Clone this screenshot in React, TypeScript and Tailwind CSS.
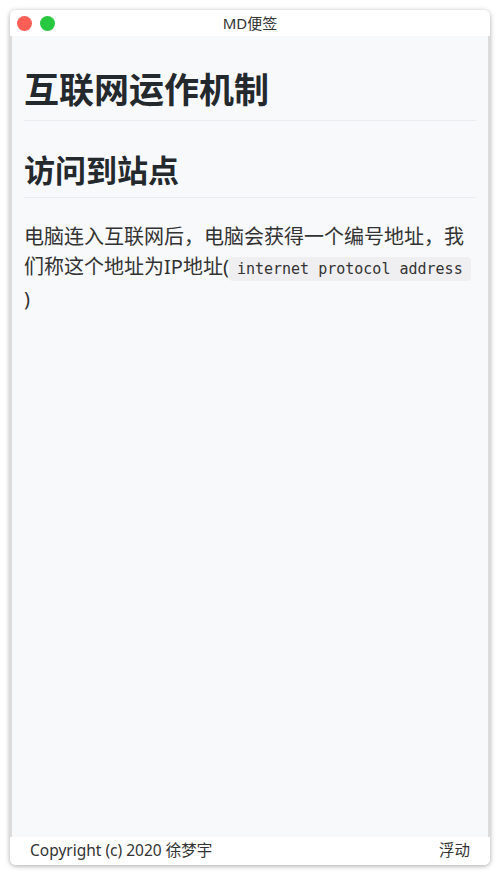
export default function App() {
    return (
        <div className="w-[500px] h-[875px] bg-white p-[10px]">
            <div className="flex flex-col h-full rounded-[6px] bg-white overflow-hidden shadow-[0_1px_5px_rgba(0,0,0,0.35)] font-['Noto_Sans','Noto_Sans_CJK_SC',sans-serif] text-[#24292e]">
                {/* Title bar */}
                <div className="relative h-[26px] shrink-0 flex items-center pl-[7px] gap-[8px] bg-white">
                    <span className="size-[15px] rounded-full bg-[#ff5f57]"></span>
                    <span className="size-[15px] rounded-full bg-[#28c840]"></span>
                    <div className="absolute inset-0 flex items-center justify-center text-[15px] text-[#333] pointer-events-none">
                        MD便签
                    </div>
                </div>

                {/* Content */}
                <div className="flex-1 bg-[#f8f9fb] border-x-2 border-[#dcdcdc] px-[12px] pt-[32px] overflow-hidden">
                    <h1 className="text-[35px] leading-[1.25] font-bold pb-[8px] border-b border-[#eaecef]">
                        互联网运作机制
                    </h1>
                    <h2 className="mt-[31px] text-[31px] leading-[1.2] font-bold pb-[8px] border-b border-[#eaecef]">
                        访问到站点
                    </h2>
                    <p className="mt-[24px] text-[20px] leading-[30px] text-[#333]">
                        电脑连入互联网后，电脑会获得一个编号地址，我们称这个地址为IP地址(
                        <code className="whitespace-nowrap font-['DejaVu_Sans_Mono',monospace] text-[15px] bg-[#efeff1] rounded-[4px] px-[8px] py-[3px]">
                            internet protocol address
                        </code>
                        <wbr />)
                    </p>
                </div>

                {/* Footer */}
                <div className="h-[28px] shrink-0 flex items-center justify-between px-[20px] text-[15.5px] text-[#333] bg-white">
                    <span>Copyright (c) 2020 徐梦宇</span>
                    <span>浮动</span>
                </div>
            </div>
        </div>
    );
}
